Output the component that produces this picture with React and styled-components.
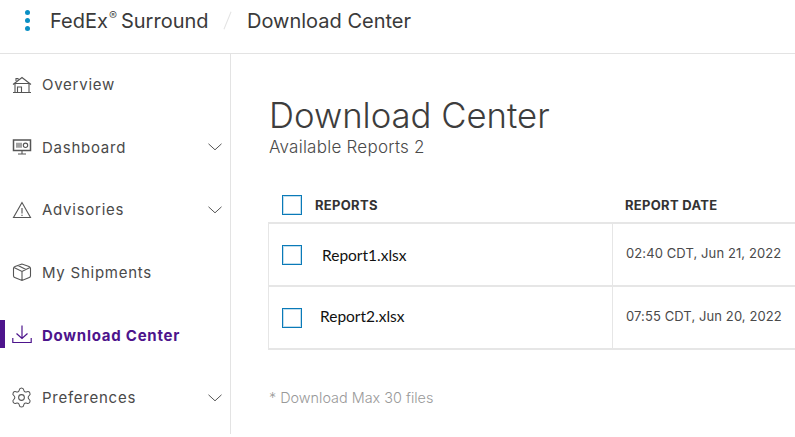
import React from 'react'
import styled, { createGlobalStyle } from 'styled-components'
import { Settings } from 'lucide-react'

const GlobalStyle = createGlobalStyle`
  html, body {
    margin: 0;
    padding: 0;
    background: #fff;
  }
  body {
    font-family: 'Lato', 'Liberation Sans', sans-serif;
    color: #333;
  }
  * {
    box-sizing: border-box;
  }
`

const Page = styled.div`
  width: 795px;
  height: 434px;
  overflow: hidden;
  display: flex;
  flex-direction: column;
`

const Header = styled.header`
  height: 54px;
  flex: none;
  display: flex;
  align-items: center;
  padding: 0 0 12px 25px;
  border-bottom: 1px solid #e3e3e3;
  font-family: 'Inter', sans-serif;
  font-size: 20px;
  color: #3a3a3a;
`

const Dots = styled.div`
  display: flex;
  flex-direction: column;
  gap: 3px;
  margin-right: 20px;
  span {
    width: 5px;
    height: 5px;
    border-radius: 50%;
    background: #0a8fc4;
  }
`

const Brand = styled.div`
  display: flex;
  align-items: baseline;
  width: 177px;
`

const Reg = styled.sup`
  font-size: 12px;
  font-weight: 300;
  line-height: 0;
  margin: 0 4px 0 1px;
  position: relative;
  top: -8px;
  vertical-align: baseline;
`

const Slash = styled.div`
  width: 1px;
  height: 19px;
  background: #e3e3e3;
  transform: rotate(22deg);
  margin-right: 19px;
`

const Body = styled.div`
  flex: 1;
  display: flex;
  min-height: 0;
`

const Sidebar = styled.nav`
  width: 231px;
  flex: none;
  border-right: 1px solid #e3e3e3;
  display: grid;
  grid-auto-rows: 62.6px;
  align-content: start;
  padding-top: 0.4px;
  margin-top: -1px;
`

const NavItem = styled.div`
  position: relative;
  display: flex;
  align-items: center;
  padding-left: 12px;
  padding-right: 8px;
  font-family: 'Inter', sans-serif;
  font-size: 15px;
  letter-spacing: 0.75px;
  font-weight: ${p => (p.$active ? 700 : 400)};
  color: ${p => (p.$active ? '#4d148c' : '#4a4a4a')};

  ${p =>
    p.$active &&
    `
    &::before {
      content: '';
      position: absolute;
      left: 0;
      top: 50%;
      width: 5px;
      height: 28px;
      margin-top: -15px;
      background: #4d148c;
    }
  `}

  svg.icon {
    width: 20px;
    height: 20px;
    margin-right: 10px;
    flex: none;
  }

  svg.gear {
    width: 23px;
    height: 23px;
    margin: 0 9px 0 -2px;
    flex: none;
  }
`

const NavLabel = styled.span`
  flex: 1;
`

const Main = styled.main`
  flex: 1;
  min-width: 0;
  padding: 41px 0 0 37px;
`

const Title = styled.h1`
  margin: -1px 0 1px 1px;
  font-family: 'Inter', sans-serif;
  font-weight: 300;
  font-size: 34.7px;
  line-height: 42px;
  color: #3d3d3d;
`

const Subtitle = styled.div`
  margin-left: 1px;
  font-family: 'Inter', sans-serif;
  font-size: 17px;
  font-weight: 300;
  letter-spacing: 0.25px;
  line-height: 21px;
  color: #4a4a4a;
`

const HeadRow = styled.div`
  display: grid;
  grid-template-columns: 344px 1fr;
  align-items: center;
  height: 38px;
  margin-top: 28px;
  font-family: 'Inter', sans-serif;
  font-size: 13px;
  font-weight: 700;
  letter-spacing: 0.3px;
  color: #333;
`

const NameCell = styled.div`
  display: flex;
  align-items: center;
  padding-left: 14px;
`

const DateHead = styled.div`
  padding-left: 13px;
`

const Table = styled.div`
  border-top: 2px solid #e6e6e6;
  border-left: 1px solid #e6e6e6;
  margin-top: -2px;
`

const Row = styled.div`
  display: grid;
  grid-template-columns: 344px 1fr;
  height: 63px;
  border-bottom: 2px solid #e6e6e6;
`

const RowName = styled(NameCell)`
  padding-left: 13px;
  border-right: 1px solid #e6e6e6;
`

const Check = styled.span`
  width: 20px;
  height: 20px;
  border: 1px solid #0a7ab8;
  box-shadow: inset 0 0 0 1px rgba(10, 122, 184, 0.25);
  flex: none;
  margin-right: ${p => p.$gap}px;
`

const FileName = styled.span`
  padding-bottom: ${p => p.$lift}px;
  font-family: 'Lato', sans-serif;
  font-size: 15.5px;
  color: #111;
`

const DateCell = styled.div`
  display: flex;
  align-items: center;
  padding: 0 0 4px 13px;
  font-family: 'Inter', sans-serif;
  font-size: 13px;
  letter-spacing: 0.1px;
  color: #4a4a4a;
  white-space: nowrap;
`

const Note = styled.div`
  margin: 39px 0 0 1px;
  font-family: 'Inter', sans-serif;
  font-size: 14.4px;
  font-weight: 300;
  color: #999;
`

const stroke = { fill: 'none', stroke: '#555', strokeWidth: 1.1 }

const HomeIcon = () => (
  <svg className="icon" viewBox="0 0 20 20" {...stroke}>
    <path d="M1 9.5 10 2.5l9 7M2 8.5h16M3 9v8.5h14V9M1 17.5h18M5.500 17.5v-5.500h4v5.500M4 6V3.500h2V4.500" />
  </svg>
)

const DashIcon = () => (
  <svg className="icon" viewBox="0 0 20 20" {...stroke}>
    <rect x="1.5" y="3" width="17" height="10.5" strokeWidth="1.5" />
    <path d="M5 5.800v5M7 5.800v5M9 5.800v5M10 13.500v3.500M6 17h8" />
    <circle cx="13.5" cy="8.3" r="2.2" />
  </svg>
)

const AlertIcon = () => (
  <svg className="icon" viewBox="0 0 20 20" {...stroke}>
    <path d="M10 2.500 1.500 17.500h17zM10 8v5.500M10 14.700v1.200" />
  </svg>
)

const BoxIcon = () => (
  <svg className="icon" viewBox="0 0 20 20" {...stroke}>
    <path d="M10 2 3 4.500Q1.500 5 1.500 6.500v7.200q0 1.300 1.200 1.800L10 18.500l7.300-3q1.200-.5 1.200-1.800V6.500q0-1.500-1.500-2zM2 5.500l8 4 8-4M10 9.500v9M6 3.500l8 4" />
  </svg>
)

const DownloadIcon = () => (
  <svg className="icon" viewBox="0 0 20 20" fill="none" stroke="#4d148c" strokeWidth="1.2">
    <path d="M10 .5v13M4.500 8.500l5.500 5 5.500-5M.8 13v4.500h18.400V13" />
  </svg>
)

const GearIcon = () => <Settings className="gear" color="#555" strokeWidth={1.1} />

const Chevron = () => (
  <svg width="14" height="8" viewBox="0 0 14 8" fill="none" stroke="#555" strokeWidth="1">
    <path d="M.5.8 7 6.800 13.500.8" />
  </svg>
)

const navItems = [
  { label: 'Overview', icon: <HomeIcon /> },
  { label: 'Dashboard', icon: <DashIcon />, more: true },
  { label: 'Advisories', icon: <AlertIcon />, more: true },
  { label: 'My Shipments', icon: <BoxIcon /> },
  { label: 'Download Center', icon: <DownloadIcon />, active: true },
  { label: 'Preferences', icon: <GearIcon />, more: true },
]

const reports = [
  { name: 'Report1.xlsx', gap: 20, lift: 0, date: '02:40 CDT, Jun 21, 2022' },
  { name: 'Report2.xlsx', gap: 18, lift: 4, date: '07:55 CDT, Jun 20, 2022' },
]

export default function App() {
  return (
    <Page>
      <GlobalStyle />
      <Header>
        <Dots>
          <span />
          <span />
          <span />
        </Dots>
        <Brand>
          FedEx<Reg>®</Reg>Surround
        </Brand>
        <Slash />
        <div>Download Center</div>
      </Header>
      <Body>
        <Sidebar>
          {navItems.map(item => (
            <NavItem key={item.label} $active={item.active}>
              {item.icon}
              <NavLabel>{item.label}</NavLabel>
              {item.more && <Chevron />}
            </NavItem>
          ))}
        </Sidebar>
        <Main>
          <Title>Download Center</Title>
          <Subtitle>Available Reports 2</Subtitle>
          <HeadRow>
            <NameCell>
              <Check $gap={13} />
              REPORTS
            </NameCell>
            <DateHead>REPORT DATE</DateHead>
          </HeadRow>
          <Table>
            {reports.map(r => (
              <Row key={r.name}>
                <RowName>
                  <Check $gap={r.gap} />
                  <FileName $lift={r.lift}>{r.name}</FileName>
                </RowName>
                <DateCell>{r.date}</DateCell>
              </Row>
            ))}
          </Table>
          <Note>* Download Max 30 files</Note>
        </Main>
      </Body>
    </Page>
  )
}
